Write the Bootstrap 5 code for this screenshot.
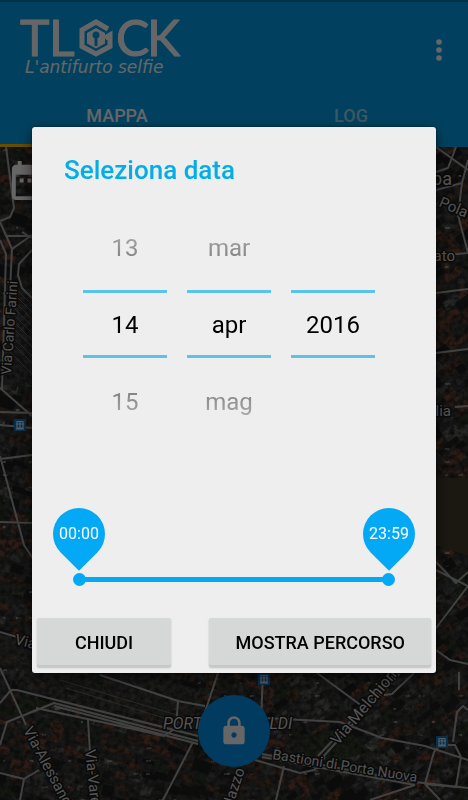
<!DOCTYPE html>
<html lang="it">
<head>
<meta charset="utf-8">
<meta name="viewport" content="width=device-width, initial-scale=1">
<title>TLock - Seleziona data</title>
<link rel="stylesheet" href="https://cdn.jsdelivr.net/npm/bootstrap@5.3.0/dist/css/bootstrap.min.css">
<style>
  body { font-family: Roboto, "Noto Sans", sans-serif; background: #333; }
  .app-top { background: #03a4ee; border-top: 2px solid #027fb8; }
  .brand-row { height: 84px; padding: 14px 20px 0; }
  .brand-row svg { display: block; }
  .more-btn { margin: 18px 0 0; width: 18px; height: 32px; line-height: 0; }
  .tab-link { height: 61px; font-size: 18px; font-weight: 500; line-height: 24px; padding: 18px 0 0; color: rgba(255,255,255,.6); text-decoration: none; border-bottom: 3px solid transparent; }
  .tab-link.is-on { color: #fff; border-color: #ffc107; }
  .map-area { background: #333; min-height: 300px; }
  .map-art { inset: 0; }
  .cal-btn { left: 6px; top: 10px; line-height: 0; }
  .lock-btn { left: 50%; bottom: 33px; width: 72px; height: 72px; margin-left: -36px; background: #0394f0; line-height: 0; }
  .shade { background: rgba(0,0,0,.6); }
  .date-box { margin: 0 32px; max-width: 480px; background: #eee; border: 0; border-radius: 3px; box-shadow: 0 4px 14px rgba(0,0,0,.6), 0 0 2px rgba(0,0,0,.6); padding-bottom: 6px; }
  .box-title { font-size: 26px; line-height: 38px; font-weight: 500; color: #03ade6; padding: 24px 32px 0; margin: 0; }
  .picker { padding: 15px 61px 0 51px; gap: 20px; }
  .spin { flex: 1 1 0; min-width: 0; }
  .spin button, .spin .spin-gap { height: 86px; padding: 2px 0 0; border: 0; background: none; font-size: 24px; color: #7c7c7c; width: 100%; }
  .spin button:first-of-type span { -webkit-mask-image: linear-gradient(rgba(0,0,0,.6), #000); }
  .spin button:last-of-type span { -webkit-mask-image: linear-gradient(#000, rgba(0,0,0,.6)); }
  .spin input { width: 100%; height: 68px; padding: 2px 0 0; border: solid #59c3e9; border-width: 3px 0; background: none; text-align: center; font-size: 24px; color: #000; border-radius: 0; outline: 0; }
  .pins { padding: 64px 21px 0; }
  .pin { width: 52px; height: 52px; z-index: 0; font-size: 16px; color: #fff; }
  .pin::before { content: ""; position: absolute; inset: 0; z-index: -1; background: #03a9f4; border-radius: 50% 50% 0 50%; transform: rotate(45deg); }
  .time-range { display: grid; margin: 13px 41px 0; background: linear-gradient(#03a9f4, #03a9f4) center / calc(100% - 12px) 5px no-repeat; }
  .time-range input { grid-area: 1 / 1; -webkit-appearance: none; appearance: none; width: 100%; height: 13px; margin: 0; background: none; pointer-events: none; }
  .time-range input::-webkit-slider-thumb { -webkit-appearance: none; width: 13px; height: 13px; border-radius: 50%; background: #03a9f4; pointer-events: auto; }
  .actions { padding: 32px 5px 0; }
  .act-btn { height: 49px; min-width: 134px; padding: 0 26px; border: 0; border-radius: 2px; background: #d6d8d7; color: #000; font-size: 18px; font-weight: 500; box-shadow: inset 0 -2px 0 #c6c8c7, 0 1px 2px rgba(0,0,0,.2); }
</style>
</head>
<body>
<div class="d-flex flex-column vh-100 overflow-hidden">
  <header class="app-top">
    <div class="brand-row d-flex justify-content-between">
      <svg width="164" height="68" viewBox="20 16 164 68" overflow="visible" role="img" aria-label="TLock, L'antifurto selfie">
        <g fill="#fff" stroke="#fff" stroke-linejoin="round" font-family="Lato, sans-serif" font-size="50">
          <text x="20" y="56">T</text><text x="49" y="56">L</text>
          <text x="116" y="56">C</text><text x="147" y="56">K</text>
        </g>
        <path d="M108 29L96 22L82 30V46.500L96 54L110 46.500V35L105 38" fill="none" stroke="#fff" stroke-width="5"/>
        <path d="M96 28L105 33V43.500L96 48.500L87 43.500V33Z" fill="#fff"/>
        <circle cx="96" cy="35" r="3.500" fill="#03a4ee"/><path d="M94.500 36H97.500V46H94.500Z" fill="#03a4ee"/>
        <text x="25" y="73" fill="#fff" font-family="DejaVu Sans, sans-serif" font-style="italic" font-size="17">L'antifurto selfie</text>
      </svg>
      <button class="more-btn btn p-0 border-0" type="button" aria-label="Altre opzioni">
        <svg width="18" height="24" viewBox="0 0 18 24" fill="#fff"><circle cx="9" cy="4" r="2.800"/><circle cx="9" cy="12" r="2.800"/><circle cx="9" cy="20" r="2.800"/></svg>
      </button>
    </div>
    <nav class="d-flex text-center">
      <a class="tab-link is-on w-50" href="#mappa">MAPPA</a>
      <a class="tab-link w-50" href="#log">LOG</a>
    </nav>
  </header>

  <main class="map-area position-relative flex-grow-1 overflow-hidden" id="mappa">
    <svg class="map-art position-absolute w-100 h-100" viewBox="0 147 468 653" preserveAspectRatio="xMidYMin slice" aria-label="Mappa">
      <defs>
        <filter id="grain" x="0" y="0" width="100%" height="100%" color-interpolation-filters="sRGB">
          <feTurbulence type="fractalNoise" baseFrequency=".2" numOctaves="3" seed="8"/>
          <feColorMatrix values="0 0 0 0 .1  0 0 0 0 .11  0 0 0 0 .1  2 0 0 0 -.65"/>
        </filter>
        <g id="stop"><rect x="-6" y="-6" width="12" height="12" rx="1" fill="#1277c4"/><path d="M-4-1H4M-3-3.500H3V3H-3ZM0-3.500V3M-4 4H4" fill="none" stroke="#cfe8ff" stroke-width="1.200"/></g>
      </defs>
      <rect y="147" width="468" height="653" fill="#393b38"/>
      <g id="blocks"></g>
      <path d="M0 632L200 690L198 738L20 690L0 660Z" fill="#454743" opacity=".7"/>
      <path d="M20 692L52 704L12 716Z M300 735L345 728L372 752L310 766Z" fill="#38422d"/>
      <path d="M10 285L32 275V385L2 385Z" fill="#444" opacity=".8"/>
      <rect y="147" width="468" height="653" filter="url(#grain)"/>
      <path d="M436 478H468V556L436 545Z" fill="#443c2e"/>
      <g fill="none" stroke="#77777a" stroke-width="1" opacity=".7">
        <path d="M12 285L32 305M12 292L32 312M12 299L32 319M12 306L32 326M12 313L32 333M12 320L32 340M12 327L32 347M10 334L32 356M10 341L32 363M8 350L32 374"/>
        <path d="M60 680L200 722M66 688L200 729M30 640L90 668"/>
      </g>
      <g fill="none" stroke="#b0b0b0" stroke-width="2" stroke-linejoin="round" opacity=".9">
        <path d="M6 147L14 208L10 217L0 221M0 222L12 249L32 235M0 240L6 254L2 390M12 249L10 290M7 236H32M22 232L32 238M32 250L19 264L18 275L22 288L32 298M0 388L32 416M0 412L32 413M0 425L32 428M0 459L32 455M0 456L24 545L34 560M0 522L34 523M0 632L34 642"/>
        <path d="M0 668L26 725M0 703L11 690L17 690L198 736M0 745L7 722L54 703L198 741M36 708L120 726L164 736L176 728M54 706L198 744M100 675L178 701L176 728M178 701L205 706M218 673L205 712M88 720L90 752M193 742L163 800M0 773L24 779L39 770M24 779L20 800"/>
        <path d="M263 673L261 720M317 673L362 706M265 718L340 722L382 738L425 746L468 760M320 760L400 673M318 756L396 673M384 695L392 694L414 673M325 757L314 770L300 773L255 760M262 754L415 782L468 788M262 757L415 785M425 784L434 752L440 745H455L461 757L456 787L425 784M453 742L457 712L463 706L468 710M284 766L276 800M425 784L440 800M415 785L370 800M459 672V690"/>
        <path d="M436 562L456 583L468 572M436 628L468 586M436 570L468 586M436 650L450 660L468 664M436 147L468 170M436 172L448 168L456 147M436 190L462 183L468 160M462 183L458 215L468 253L436 256M436 293L468 289M436 353L468 349M455 407L468 406"/>
      </g>
      <g fill="#d2d2d2" stroke="#181818" stroke-width="3" stroke-linejoin="round" paint-order="stroke" font-family="Roboto, sans-serif" font-size="15">
        <text transform="translate(11 375) rotate(-86)" font-size="14">Via Carlo Farini</text>
        <text x="452" y="185" text-anchor="end" font-size="18">pa</text>
        <text transform="translate(438 206) rotate(23)">Pola</text>
        <text x="455" y="261" text-anchor="end">ato</text>
        <text x="451" y="416" text-anchor="end">lia</text>
        <text transform="translate(14 644) rotate(14)">Via</text>
        <text transform="translate(23 730) rotate(62)">Via-Alessandri</text>
        <text transform="translate(85 750) rotate(84)">Via-Varese</text>
        <text x="163" y="729" font-style="italic" font-size="16">PORTA GARIBALDI</text>
        <text transform="translate(338 746) rotate(-50)" font-size="16">Via Melchiorre Gioia</text>
        <text transform="translate(272 759) rotate(9)" font-size="14">Bastioni di Porta Nuova</text>
        <text transform="translate(221 843) rotate(-72)">Via Milazzo</text>
      </g>
      <use href="#stop" x="20" y="425"/><use href="#stop" x="264" y="679"/><use href="#stop" x="442" y="742"/>
    </svg>
    <button class="cal-btn btn p-0 border-0 position-absolute" type="button" aria-label="Seleziona data">
      <svg width="47" height="47" viewBox="0 0 24 24" fill="#fff"><path d="M9 11H7v2h2v-2zm4 0h-2v2h2v-2zm4 0h-2v2h2v-2zm2-7h-1V2h-2v2H8V2H6v2H5c-1.110 0-1.990.900-1.990 2L3 20c0 1.100.890 2 2 2h14c1.100 0 2-.900 2-2V6c0-1.100-.900-2-2-2zm0 16H5V9h14v11z"/></svg>
    </button>
    <button class="lock-btn btn p-0 border-0 rounded-circle position-absolute" type="button" aria-label="Blocca">
      <svg width="32" height="32" viewBox="0 0 24 24" fill="#fff"><path d="M18 8h-1V6c0-2.760-2.240-5-5-5S7 3.240 7 6v2H6c-1.100 0-2 .900-2 2v10c0 1.100.900 2 2 2h12c1.100 0 2-.900 2-2V10c0-1.100-.900-2-2-2zm-6 9c-1.100 0-2-.900-2-2s.900-2 2-2 2 .900 2 2-.900 2-2 2zm3.100-9H8.900V6c0-1.710 1.390-3.100 3.100-3.100s3.100 1.390 3.100 3.100v2z"/></svg>
    </button>
  </main>
</div>

<div class="shade position-fixed top-0 start-0 w-100 h-100 d-flex align-items-center justify-content-center">
  <form class="date-box flex-grow-1" role="dialog" aria-labelledby="boxTitle">
    <h1 class="box-title" id="boxTitle">Seleziona data</h1>
    <div class="picker d-flex">
      <div class="spin"><button type="button"><span>13</span></button><input type="text" value="14" aria-label="Giorno"><button type="button"><span>15</span></button></div>
      <div class="spin"><button type="button"><span>mar</span></button><input type="text" value="apr" aria-label="Mese"><button type="button"><span>mag</span></button></div>
      <div class="spin"><div class="spin-gap"></div><input type="text" value="2016" aria-label="Anno"><div class="spin-gap"></div></div>
    </div>
    <div class="pins d-flex justify-content-between">
      <output class="pin position-relative d-flex align-items-center justify-content-center" for="fromTime">00:00</output>
      <output class="pin position-relative d-flex align-items-center justify-content-center" for="toTime">23:59</output>
    </div>
    <div class="time-range">
      <input type="range" id="fromTime" min="0" max="1439" value="0" aria-label="Ora di inizio">
      <input type="range" id="toTime" min="0" max="1439" value="1439" aria-label="Ora di fine">
    </div>
    <div class="actions d-flex justify-content-between">
      <button class="act-btn" type="button">CHIUDI</button>
      <button class="act-btn" type="button">MOSTRA PERCORSO</button>
    </div>
  </form>
</div>

<script src="https://cdn.jsdelivr.net/npm/bootstrap@5.3.0/dist/js/bootstrap.bundle.min.js"></script>
<script>
  // Scatter roofs and courtyards over the aerial view, with a fixed seed.
  let seed = 41;
  const rnd = () => (seed = (seed * 16807) % 2147483647) / 2147483647;
  const tones = ["#6e4735", "#704836", "#5c3f32", "#232422", "#1b1d1c", "#4f504d", "#62625f", "#333b2c", "#4a4b48"];
  let art = "";
  for (let y = 147; y < 800; y += 13) {
    for (let x = 0; x < 468; x += 13) {
      const tilt = x < 260 ? 17 : -35, w = 5 + rnd() * 16, h = 4 + rnd() * 8;
      const tone = tones[Math.floor(rnd() * tones.length)];
      art += `<rect x="${x}" y="${y}" width="${w}" height="${h}" fill="${tone}" transform="rotate(${tilt} ${x} ${y})"/>`;
      if (rnd() > .8) art += `<rect x="${x + 3}" y="${y + 2}" width="${2 + rnd() * 4}" height="2" fill="#94928b"/>`;
    }
  }
  document.getElementById("blocks").innerHTML = art;
</script>
</body>
</html>
